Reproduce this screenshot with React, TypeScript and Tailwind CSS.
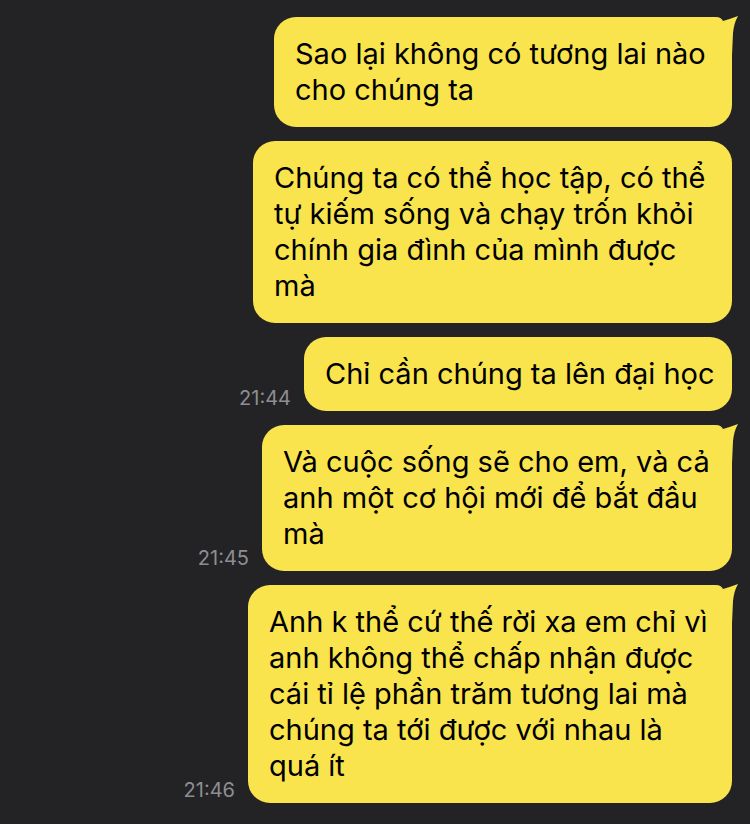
import React from 'react';

interface Message {
  lines: string[];
  width: number;
  time?: string;
  tail?: boolean;
}

const messages: Message[] = [
  { lines: ['Sao lại không có tương lai nào', 'cho chúng ta'], width: 458, tail: true },
  {
    lines: ['Chúng ta có thể học tập, có thể', 'tự kiếm sống và chạy trốn khỏi', 'chính gia đình của mình được', 'mà'],
    width: 479,
  },
  { lines: ['Chỉ cần chúng ta lên đại học'], width: 428, time: '21:44' },
  {
    lines: ['Và cuộc sống sẽ cho em, và cả', 'anh một cơ hội mới để bắt đầu', 'mà'],
    width: 470,
    time: '21:45',
    tail: true,
  },
  {
    lines: [
      'Anh k thể cứ thế rời xa em chỉ vì',
      'anh không thể chấp nhận được',
      'cái tỉ lệ phần trăm tương lai mà',
      'chúng ta tới được với nhau là',
      'quá ít',
    ],
    width: 484,
    time: '21:46',
    tail: true,
  },
];

function Tail() {
  return (
    <svg
      className="absolute top-[-2px] right-[-8px] w-[30px] h-[40px]"
      viewBox="0 0 30 40"
      fill="#f9e44d"
    >
      <path d="M0 2 H6 Q11 2 13 6 Q20 4 28 1 Q24 8 23 18 L22 40 H0 Z" />
    </svg>
  );
}

export default function App() {
  return (
    <div className="w-[750px] h-[824px] overflow-hidden bg-[#232325] flex flex-col gap-[14px] pt-[17px] pr-[18px] font-['Inter','Noto_Sans',sans-serif]">
      {messages.map((m, i) => (
        <div key={i} className="flex justify-end items-end gap-[13px]">
          {m.time && (
            <span className="text-[20px] leading-[20px] mb-[3px] text-[#8e8e92]">
              {m.time}
            </span>
          )}
          <div
            className="relative bg-[#f9e44d] rounded-[22px] px-[21px] py-[19px] text-[29px] leading-[36px] text-black whitespace-nowrap"
            style={{ width: m.width }}
          >
            {m.tail && <Tail />}
            {m.lines.map((line, j) => (
              <div key={j}>{line}</div>
            ))}
          </div>
        </div>
      ))}
    </div>
  );
}
